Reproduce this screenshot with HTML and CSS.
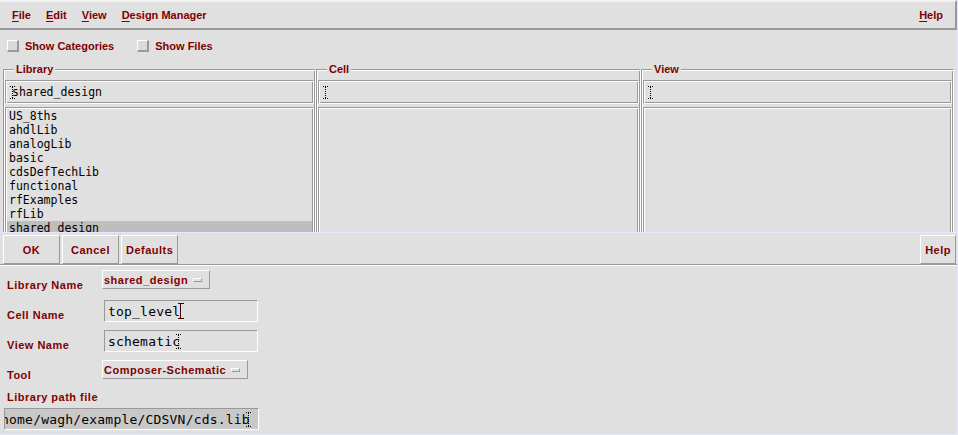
FILE: index.html
```html
<!DOCTYPE html>
<html>
  <head>
    <title>Library Manager</title>
    <link rel="stylesheet" href="styles.css">
  </head>
  <body>
    <div class="window">
      <div class="menubar">
        <span class="menu"><u>F</u>ile</span>
        <span class="menu"><u>E</u>dit</span>
        <span class="menu"><u>V</u>iew</span>
        <span class="menu"><u>D</u>esign Manager</span>
        <span class="menu menu-help"><u>H</u>elp</span>
      </div>

      <div class="browser">
        <div class="toggles">
          <label class="toggle"><span class="check"></span>Show Categories</label>
          <label class="toggle"><span class="check"></span>Show Files</label>
        </div>

        <div class="panes">
          <fieldset class="pane">
            <legend>Library</legend>
            <div class="filter">
              <svg class="ibeam" width="5" height="13" viewBox="0 0 5 13"><path d="M0 0.5h5M0 12.5h5M2.5 1v11" stroke="#000" stroke-dasharray="1 1" fill="none"/></svg>
              <span class="filter-text">shared_design</span>
            </div>
            <ul class="list">
              <li>US_8ths</li>
              <li>ahdlLib</li>
              <li>analogLib</li>
              <li>basic</li>
              <li>cdsDefTechLib</li>
              <li>functional</li>
              <li>rfExamples</li>
              <li>rfLib</li>
              <li class="selected">shared_design</li>
            </ul>
          </fieldset>

          <fieldset class="pane">
            <legend>Cell</legend>
            <div class="filter">
              <svg class="ibeam" width="5" height="13" viewBox="0 0 5 13"><path d="M0 0.5h5M0 12.5h5M2.5 1v11" stroke="#000" stroke-dasharray="1 1" fill="none"/></svg>
            </div>
            <ul class="list"></ul>
          </fieldset>

          <fieldset class="pane">
            <legend>View</legend>
            <div class="filter">
              <svg class="ibeam" width="5" height="13" viewBox="0 0 5 13"><path d="M0 0.5h5M0 12.5h5M2.5 1v11" stroke="#000" stroke-dasharray="1 1" fill="none"/></svg>
            </div>
            <ul class="list"></ul>
          </fieldset>
        </div>
      </div>

      <div class="buttons">
        <span class="button">OK</span>
        <span class="button">Cancel</span>
        <span class="button">Defaults</span>
        <span class="button button-help">Help</span>
      </div>

      <div class="form">
        <div class="field">
          <span class="field-label">Library Name</span>
          <span class="option">shared_design<span class="option-mark"></span></span>
        </div>
        <div class="field">
          <span class="field-label">Cell Name</span>
          <span class="entry">top_level<svg class="cursor" width="6" height="16" viewBox="0 0 6 16"><path d="M0 0.5h6M0 15.5h6M2.5 1v14" stroke="#3a0000" fill="none"/></svg></span>
        </div>
        <div class="field">
          <span class="field-label">View Name</span>
          <span class="entry">schematic<svg class="ibeam ibeam-over" width="5" height="15" viewBox="0 0 5 15"><path d="M0 0.5h5M0 14.5h5M2.5 1v13" stroke="#000" stroke-dasharray="1 1" fill="none"/></svg></span>
        </div>
        <div class="field">
          <span class="field-label">Tool</span>
          <span class="option">Composer-Schematic<span class="option-mark"></span></span>
        </div>
        <div class="path">
          <div class="path-label">Library path file</div>
          <div class="entry entry-path"><span class="path-text">/home/wagh/example/CDSVN/cds.lib</span><svg class="ibeam ibeam-over" width="5" height="15" viewBox="0 0 5 15"><path d="M0 0.5h5M0 14.5h5M2.5 1v13" stroke="#000" stroke-dasharray="1 1" fill="none"/></svg></div>
        </div>
      </div>
    </div>
  </body>
</html>
```

FILE: styles.css
```css
/* Whole dialog */
body {
  margin: 0;
  background-color: #e0e0e0;
  font: bold 11px "Liberation Sans", Arial, sans-serif;
  color: #800000;
}

.window {
  width: 957px;
  height: 434px;
  border-right: 1px solid #e6e6fa;
  border-bottom: 1px solid #e6e6fa;
  overflow: hidden;
}

/* Menu bar on top */
.menubar {
  display: flex;
  align-items: center;
  gap: 15px;
  height: 26px;
  padding: 0 12px;
  border-top: 2px solid #f2f2f2;
  border-bottom: 2px solid #999;
  border-right: 2px solid #999;
}

.menu u {
  text-underline-offset: 2px;
}

.menu-help {
  margin-left: auto;
}

/* Upper part with the three browsers */
.browser {
  height: 202px;
  border-bottom: 1px solid #e6e6fa;
  overflow: hidden;
}

.toggles {
  display: flex;
  align-items: center;
  gap: 23px;
  height: 31px;
  padding: 0 0 2px 7px;
}

.toggle {
  display: flex;
  align-items: center;
  gap: 6px;
}

.check {
  width: 9px;
  height: 9px;
  background-color: #dadada;
  border-style: solid;
  border-width: 1px 2px 2px 1px;
  border-color: #fff #999 #999 #fff;
}

.panes {
  display: grid;
  grid-template-columns: 313px 1fr 313px;
  padding: 0 3px;
}

/* Groove style used by the panes and their boxes */
.pane,
.filter,
.list {
  border: 1px solid;
  border-color: #999 #fff #fff #999;
  box-shadow: inset 1px 1px 0 #fff, inset -1px -1px 0 #999;
}

.pane {
  margin: 0;
  min-width: 0;
  padding: 4px 1px 0 1px;
}

.pane legend {
  margin-left: 9px;
  padding: 0 2px;
  line-height: 13px;
  background-color: #e0e0e0;
}

.filter {
  display: flex;
  align-items: center;
  height: 24px;
  box-sizing: border-box;
  padding-left: 4px;
  font: 11.5px "DejaVu Sans Mono", "Liberation Mono", monospace;
  color: #000;
}

.filter-text {
  margin-left: -3px;
}

.ibeam {
  display: block;
  flex-shrink: 0;
}

.list {
  height: 200px;
  margin: 3px 0 0 0;
  padding: 1px 1px;
  list-style: none;
  font: 11.5px/14px "DejaVu Sans Mono", "Liberation Mono", monospace;
  color: #000;
}

.list li {
  padding-left: 2px;
  white-space: nowrap;
}

.list .selected {
  background-color: #bebebe;
}

/* Button row */
.buttons {
  display: flex;
  gap: 2px;
  padding: 2px 1px 0 3px;
  border-bottom: 1px solid #999;
  letter-spacing: 0.5px;
}

.button {
  display: flex;
  align-items: center;
  justify-content: center;
  min-width: 47px;
  height: 27px;
  padding: 0 4px;
  border: 1px solid;
  border-color: #fff #999 #999 #fff;
}

.button-help {
  min-width: 0;
  margin-left: auto;
}

/* Lower form */
.form {
  border-top: 1px solid #fff;
  padding-left: 7px;
  letter-spacing: 0.5px;
}

.field {
  display: flex;
  align-items: flex-start;
  height: 30px;
}

.field-label {
  width: 95px;
  align-self: flex-end;
  margin-bottom: 4px;
  line-height: 13px;
}

.option {
  display: flex;
  align-items: center;
  gap: 5px;
  height: 17px;
  margin-top: 4px;
  padding: 0 7px 0 1px;
  border: 1px solid;
  border-color: #fff #999 #999 #fff;
}

.option-mark {
  width: 7px;
  height: 2px;
  border: 1px solid;
  border-color: #fff #999 #999 #fff;
}

.entry {
  display: flex;
  align-items: center;
  width: 149px;
  height: 20px;
  margin: 4px 0 0 2px;
  padding-left: 3px;
  border: 1px solid;
  border-color: #999 #fff #fff #999;
  font: 13px "DejaVu Sans Mono", "Liberation Mono", monospace;
  letter-spacing: 0.2px;
  color: #000;
  white-space: nowrap;
  overflow: hidden;
}

.cursor {
  display: block;
  flex-shrink: 0;
  margin-left: -2px;
}

.ibeam-over {
  margin-left: -4px;
}

.path-label {
  margin-top: 5px;
  line-height: 13px;
}

.entry-path {
  width: 252px;
  margin: 4px 0 0 -3px;
  padding-left: 1px;
  background-color: #c8c8c8;
}

.path-text {
  margin-left: -13px;
}
```
